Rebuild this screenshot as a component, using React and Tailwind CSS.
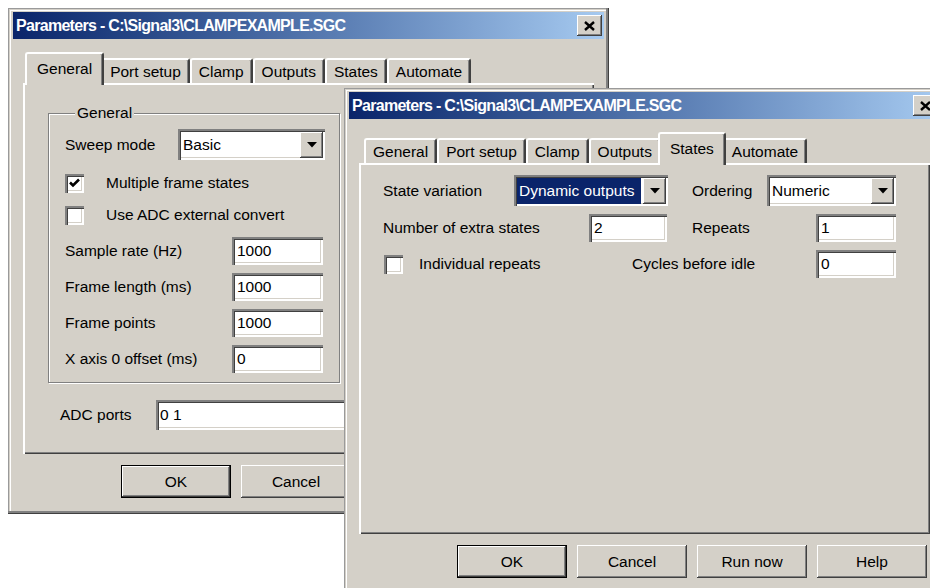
import React from "react";

// classic 3D bevels
const frame =
  "shadow-[inset_-1px_-1px_0_#404040,inset_-3px_-3px_0_#808080,inset_1px_1px_0_#9a9a9a,inset_2px_2px_0_#d4d0c8,inset_3px_3px_0_#ffffff]";
const raised =
  "shadow-[inset_-1px_-1px_0_#404040,inset_1px_1px_0_#ffffff,inset_-2px_-2px_0_#808080,inset_2px_2px_0_#d4d0c8]";
const sunken =
  "shadow-[inset_2px_2px_0_#808080,inset_3px_3px_0_#404040,inset_-2px_-2px_0_#ffffff,inset_-3px_-3px_0_#d4d0c8]";
const panel =
  "shadow-[inset_2px_2px_0_#ffffff,inset_-1px_-1px_0_#404040,inset_-2px_-2px_0_#808080]";

const TABS = ["General", "Port setup", "Clamp", "Outputs", "States", "Automate"];
const TITLE = "Parameters - C:\\Signal3\\CLAMPEXAMPLE.SGC";

function CloseButton() {
  return (
    <div className={`w-[25px] h-[21px] bg-[#d4d0c8] ${raised} flex items-center justify-center`}>
      <svg width="11" height="10" viewBox="0 0 11 10">
        <path d="M1 1 L10 9 M10 1 L1 9" stroke="#000" strokeWidth="2.4" />
      </svg>
    </div>
  );
}

function TitleBar({ title }) {
  return (
    <div className="h-[27px] flex items-center bg-linear-to-r from-[#0a246a] to-[#a6caf0] pl-[3px] pr-[2px]">
      <span className="flex-1 text-white font-bold text-[16px] tracking-[-0.7px] leading-none whitespace-nowrap">
        {title}
      </span>
      <CloseButton />
    </div>
  );
}

function Tabs({ active }) {
  return (
    <div className="flex items-end h-[32px] mt-[12px] pl-[5px]">
      {TABS.map((t) =>
        t === active ? (
          <div
            key={t}
            className="relative z-10 h-[33px] -mx-[3px] -mb-[2px] pb-[2px] px-[10px] flex items-center bg-[#d4d0c8] border-l-2 border-t-2 border-white border-r-2 border-r-[#404040] rounded-t-[3px] shadow-[inset_-1px_0_0_#808080]"
          >
            {t}
          </div>
        ) : (
          <div
            key={t}
            className="h-[25px] px-[7px] flex items-center bg-[#d4d0c8] border-l-2 border-t-2 border-white border-r-2 border-r-[#404040] rounded-t-[3px] shadow-[inset_-1px_0_0_#808080]"
          >
            {t}
          </div>
        )
      )}
    </div>
  );
}

function Button({ label, primary }) {
  return (
    <div
      className={`w-[110px] h-[33px] flex items-center justify-center bg-[#d4d0c8] ${raised} ${
        primary ? "border border-black" : ""
      }`}
    >
      {label}
    </div>
  );
}

function Field({ value, w }) {
  return (
    <div className={`h-[28px] ${w} bg-white ${sunken} flex items-center pl-[5px]`}>{value}</div>
  );
}

function Combo({ value, w, selected }) {
  return (
    <div className={`h-[31px] ${w} bg-white ${sunken} flex items-stretch pt-[3px] pl-[3px] pr-[2px] pb-[2px]`}>
      <div className="flex-1 flex items-center pr-[2px]">
        <span
          className={
            selected
              ? "flex-1 h-full flex items-center bg-[#0a246a] text-white pl-[2px]"
              : "pl-[2px]"
          }
        >
          {value}
        </span>
      </div>
      <div className={`w-[23px] bg-[#d4d0c8] ${raised} flex items-center justify-center`}>
        <svg width="10" height="6" viewBox="0 0 10 6">
          <polygon points="0,0 10,0 5,5.5" fill="#000" />
        </svg>
      </div>
    </div>
  );
}

function Check({ checked }) {
  return (
    <div className={`w-[19px] h-[19px] bg-white ${sunken} flex items-center justify-center`}>
      {checked && (
        <svg width="13" height="12" viewBox="0 0 13 12">
          <path d="M2 5.5 L5 8.5 L11 2.5" stroke="#000" strokeWidth="2.6" fill="none" />
        </svg>
      )}
    </div>
  );
}

function Dialog({ active, className, children }) {
  return (
    <div
      className={`absolute w-[601px] h-[506px] bg-[#d4d0c8] ${frame} px-[5px] pt-[4px] flex flex-col ${className}`}
    >
      <TitleBar title={TITLE} />
      <div className="mx-[10px]">
        <Tabs active={active} />
        <div className={`h-[371px] bg-[#d4d0c8] ${panel}`}>{children}</div>
      </div>
      <div className="flex justify-end gap-[10px] mt-[11px] pr-[13px]">
        <Button label="OK" primary />
        <Button label="Cancel" />
        <Button label="Run now" />
        <Button label="Help" />
      </div>
    </div>
  );
}

function GeneralPage() {
  const rows = [
    ["Sample rate (Hz)", "1000"],
    ["Frame length (ms)", "1000"],
    ["Frame points", "1000"],
    ["X axis 0 offset (ms)", "0"],
  ];
  return (
    <div className="pl-[25px] pt-[21px]">
      <fieldset className="w-[292px] border border-[#808080] shadow-[inset_1px_1px_0_#ffffff,1px_1px_0_#ffffff] pl-[16px]">
        <legend className="ml-[10px] px-[2px] leading-[18px] bg-[#d4d0c8]">General</legend>
        <div className="flex flex-col pb-[9px]">
          <div className="flex items-center h-[31px] mt-[7px]">
            <span className="w-[113px]">Sweep mode</span>
            <Combo value="Basic" w="w-[147px]" />
          </div>
          <div className="flex items-center h-[20px] mt-[13px]">
            <Check checked />
            <span className="ml-[22px]">Multiple frame states</span>
          </div>
          <div className="flex items-center h-[20px] mt-[12px]">
            <Check />
            <span className="ml-[22px]">Use ADC external convert</span>
          </div>
          <div className="flex flex-col gap-[8px] mt-[12px]">
            {rows.map(([label, value]) => (
              <div key={label} className="flex items-center">
                <span className="w-[167px]">{label}</span>
                <Field value={value} w="w-[91px]" />
              </div>
            ))}
          </div>
        </div>
      </fieldset>
      <div className="flex items-center mt-[17px] pl-[12px]">
        <span className="w-[96px]">ADC ports</span>
        <div className={`h-[30px] w-[400px] bg-white ${sunken} flex items-center pl-[4px]`}>0 1</div>
      </div>
    </div>
  );
}

function StatesPage() {
  return (
    <div className="pl-[24px] pt-[12px] flex flex-col">
      <div className="flex items-center">
        <span className="w-[131px]">State variation</span>
        <Combo value="Dynamic outputs" w="w-[154px]" selected />
        <span className="w-[24px]" />
        <span className="w-[75px]">Ordering</span>
        <Combo value="Numeric" w="w-[129px]" />
      </div>
      <div className="flex items-center mt-[8px]">
        <span className="w-[206px]">Number of extra states</span>
        <Field value="2" w="w-[78px]" />
        <span className="w-[25px]" />
        <span className="w-[124px]">Repeats</span>
        <Field value="1" w="w-[80px]" />
      </div>
      <div className="flex items-center mt-[8px]">
        <div className="ml-[1px]">
          <Check />
        </div>
        <span className="w-[213px] ml-[16px]">Individual repeats</span>
        <span className="w-[184px]">Cycles before idle</span>
        <Field value="0" w="w-[80px]" />
      </div>
    </div>
  );
}

export default function App() {
  return (
    <div className="relative w-[930px] h-[588px] overflow-hidden bg-white text-black text-[15.5px] leading-[18px] font-['Liberation_Sans',Arial,sans-serif]">
      <Dialog active="General" className="left-[8px] top-[8px]">
        <GeneralPage />
      </Dialog>
      <Dialog active="States" className="left-[344px] top-[88px]">
        <StatesPage />
      </Dialog>
    </div>
  );
}
